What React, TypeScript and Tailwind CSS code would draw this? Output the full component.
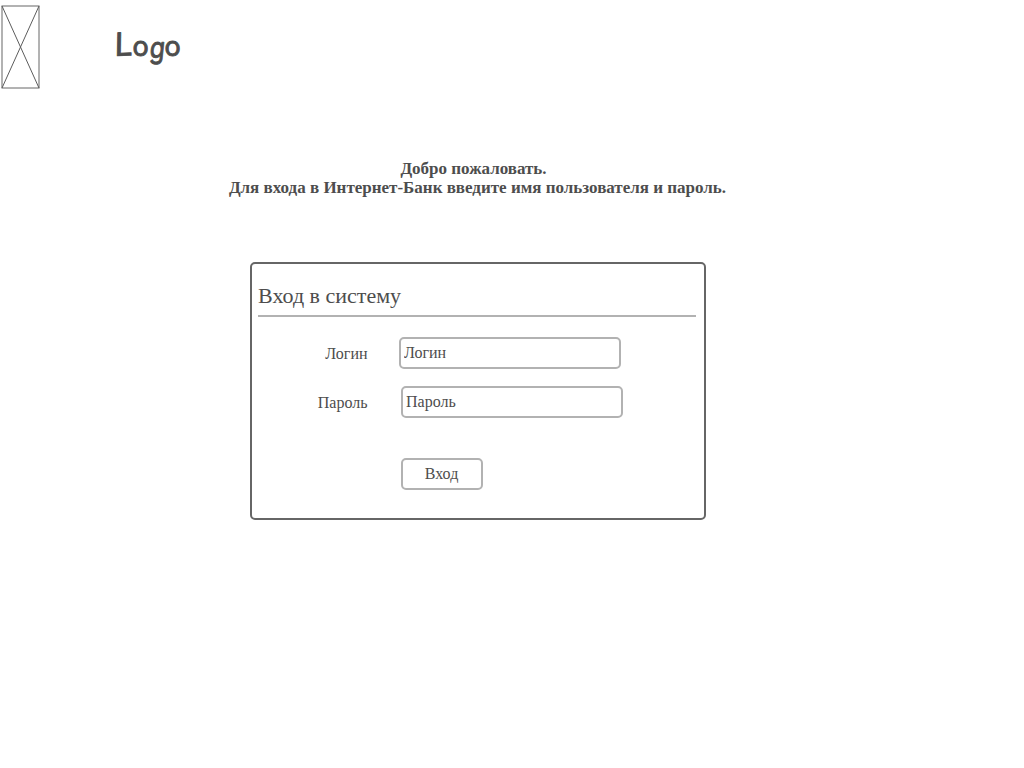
export default function App() {
  return (
    <main className="h-screen w-[1024px] overflow-hidden bg-white font-['Liberation_Serif',serif] text-[#4d4d4d]">
      <header className="flex h-[89px] items-start pt-[5px] pl-px">
        <svg className="h-[84px] w-[39px] shrink-0" viewBox="0 0 39 84" fill="none">
          <rect x="1" y="1" width="37" height="82" stroke="#666666" strokeWidth="1" />
          <path d="M1 1L38 83M38 1L1 83" stroke="#5c5c5c" strokeWidth="1" />
        </svg>
        <svg className="h-[84px] w-[160px]" viewBox="0 0 160 84" fill="#4d4d4d" role="img" aria-label="Logo">
          <g fontFamily="Inter, sans-serif" fontWeight="400" stroke="#4d4d4d" strokeWidth="0.9" strokeLinejoin="round">
            <text transform="translate(74.5 51) rotate(-2) skewX(-3)" fontSize="32">L</text>
            <text x="92.5" y="51" fontSize="27">o</text>
            <text transform="translate(109 52.5) skewX(-6) scale(0.85 1)" fontSize="29">g</text>
            <text x="124.5" y="51" fontSize="27">o</text>
          </g>
        </svg>
      </header>

      <section className="w-[955px] pt-[70px] text-center text-[17px] leading-[19px] font-bold whitespace-nowrap">
        <h1 className="pr-[8px]">Добро пожаловать.</h1>
        <p>Для входа в Интернет-Банк введите имя пользователя и пароль.</p>
      </section>

      <form className="mt-[65px] ml-[250px] h-[258px] w-[456px] rounded-[5px] border-2 border-[#666666] pl-[6px] text-[16px] leading-[18px]">
        <h2 className="h-[53px] w-[438px] border-b-2 border-[#b2b2b2] pt-[19px] text-[22px] leading-[26px]">Вход в систему</h2>
        <div className="mt-[20px] flex items-start">
          <label htmlFor="login" className="w-[110px] pt-[8px] pr-[0.5px] text-right">Логин</label>
          <input id="login" defaultValue="Логин" className="ml-[31px] h-[32px] w-[222px] rounded-[5px] border-2 border-[#b2b2b2] pl-[3px] outline-none" />
        </div>
        <div className="mt-[17px] flex items-start">
          <label htmlFor="password" className="w-[110px] pt-[8px] pr-[0.5px] text-right">Пароль</label>
          <input id="password" defaultValue="Пароль" className="ml-[33px] h-[32px] w-[222px] rounded-[5px] border-2 border-[#b2b2b2] pl-[3px] outline-none" />
        </div>
        <button type="button" className="mt-[40px] ml-[143px] flex h-[32px] w-[82px] items-center justify-center rounded-[5px] border-2 border-[#b2b2b2] pr-px pb-px">Вход</button>
      </form>
    </main>
  );
}
